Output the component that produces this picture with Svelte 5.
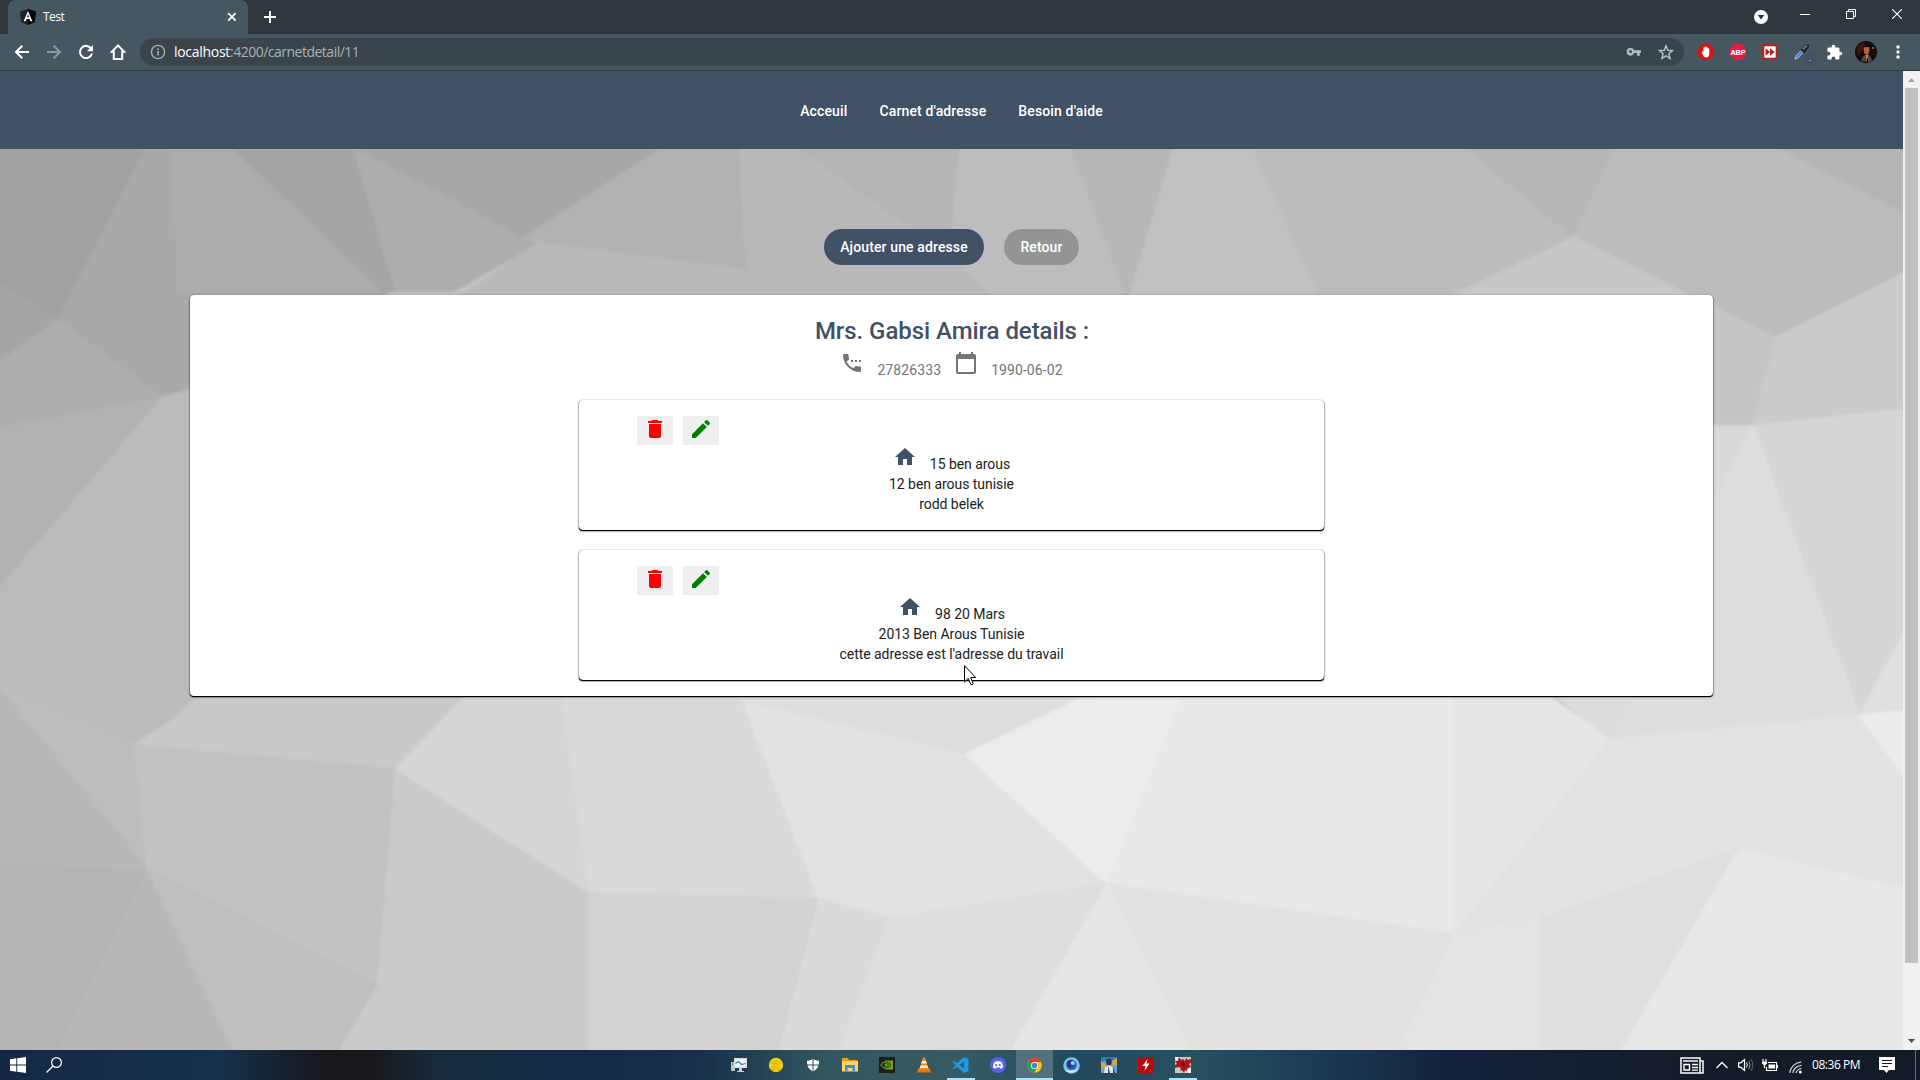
<script>
  // Facets of the low-poly page background: [fill, points]
  const facets = [
    ['#a2a2a2', '0,149 150,149 61,330 0,290'],
    ['#a5a5a5', '0,290 61,330 0,375'],
    ['#a9a9a9', '150,149 233,149 392,300 190,420 165,410 61,330'],
    ['#adadad', '61,330 165,410 0,442 0,375'],
    ['#b2b2b2', '0,442 165,410 0,611'],
    ['#acacac', '175,149 233,149 392,300 180,300'],
    ['#a5a5a5', '233,149 355,149 398,300 385,300'],
    ['#adadad', '355,149 526,244 539,250 455,300 398,300'],
    ['#a7a7a7', '355,149 667,149 526,244'],
    ['#b2b2b2', '667,149 740,149 747,278 539,250 526,244'],
    ['#b9b9b9', '539,250 747,278 860,310 455,310'],
    ['#b9b9b9', '740,149 796,149 950,262 1000,310 860,310 747,278'],
    ['#b5b5b5', '796,149 960,149 950,262'],
    ['#bdbdbd', '960,149 1070,149 1128,310 1000,310 950,262'],
    ['#b7b7b7', '1070,149 1174,149 1128,310'],
    ['#c1c1c1', '1174,149 1251,149 1321,310 1128,310'],
    ['#bcbcbc', '1251,149 1462,149 1572,244 1440,310 1321,310'],
    ['#b7b7b7', '1462,149 1615,149 1572,244'],
    ['#bcbcbc', '1615,149 1774,149 1903,220 1903,280 1774,348 1713,318 1572,244'],
    ['#b5b5b5', '1774,149 1903,149 1903,220'],
    ['#c7c7c7', '1572,244 1713,318 1713,340 1440,310'],
    ['#c5c5c5', '1700,310 1774,348 1750,440 1700,440'],
    ['#cbcbcb', '1774,348 1903,280 1903,422 1750,440'],
    ['#d9d9d9', '1750,440 1700,620 1700,440'],
    ['#d6d6d6', '1750,440 1903,422 1903,650 1857,740'],
    ['#dddddd', '1750,440 1857,740 1609,764 1690,560'],
    ['#e0e0e0', '1903,650 1903,735 1857,740'],
    ['#bbbbbb', '0,611 165,410 200,400 200,725 137,770 0,709'],
    ['#bdbdbd', '0,709 137,770 150,899'],
    ['#b8b8b8', '0,709 150,899 0,895'],
    ['#c9c9c9', '175,745 220,700 465,700 465,725 398,795 137,770'],
    ['#c2c2c2', '137,770 398,795 392,1010 380,1020 150,899'],
    ['#b5b5b5', '0,895 150,899 60,1090 0,1090'],
    ['#b8b8b8', '150,899 238,1090 60,1090'],
    ['#bfbfbf', '150,899 380,1020 340,1090 238,1090'],
    ['#cacaca', '398,795 591,923 591,1090 340,1090 380,1020'],
    ['#d6d6d6', '465,722 490,690 565,690 591,923 398,795'],
    ['#dadada', '560,690 742,700 820,930 591,923'],
    ['#e2e2e2', '742,720 966,780 1107,914 890,950 820,930'],
    ['#dddddd', '742,722 742,690 1100,690 1080,722 966,780'],
    ['#d3d3d3', '591,923 820,930 780,1090 591,1090'],
    ['#dadada', '820,930 890,950 840,1090 780,1090'],
    ['#dedede', '890,950 1107,914 1010,1090 840,1090'],
    ['#ececec', '1080,722 1190,700 1107,914 966,780'],
    ['#e9e9e9', '1190,700 1450,700 1453,966 1107,914'],
    ['#e6e6e6', '1450,700 1540,715 1609,764 1453,966'],
    ['#dcdcdc', '1530,700 1640,700 1609,764'],
    ['#e3e3e3', '1609,764 1857,740 1903,800 1903,920 1737,878 1690,925 1453,966'],
    ['#ebebeb', '1857,740 1903,735 1903,805'],
    ['#e2e2e2', '1107,914 1453,966 1395,1090 1190,1090'],
    ['#e6e6e6', '1107,914 1190,1090 1010,1090'],
    ['#e5e5e5', '1453,966 1540,950 1540,1090 1395,1090'],
    ['#dfdfdf', '1540,950 1737,878 1618,1090 1540,1090'],
    ['#e8e8e8', '1737,878 1903,920 1903,1090 1618,1090'],
  ];

  const links = ['Acceuil', "Carnet d'adresse", "Besoin d'aide"];
  const addresses = [
    { first: '15 ben arous', second: '12 ben arous tunisie', note: 'rodd belek' },
    { first: '98 20 Mars', second: '2013 Ben Arous Tunisie', note: "cette adresse est l'adresse du travail" },
  ];
</script>

<div class="screen">
  <div class="titlebar">
    <div class="tab">
      <svg class="favicon" width="16" height="16" viewBox="0 0 16 16">
        <path d="M8 0 16 2.6 14.8 13 8 16 1.2 13 0 2.6z" fill="#1b2129" /><path d="M8 0 16 2.6 14.8 13 8 16z" fill="#05070c" />
        <path d="M8 2 3.6 12.200h2l.9-2.200h3l.9 2.200h2zM8 5.200l1 3H7z" fill="#fff" fill-rule="evenodd" />
      </svg>
      <span class="tab-title">Test</span>
      <svg width="10" height="10" viewBox="0 0 10 10"><path d="M1.2 1.2l7.4 7.4M8.6 1.2 1.2 8.6" stroke="#fff" stroke-width="1.7" /></svg>
    </div>
    <svg class="plus" width="12" height="12" viewBox="0 0 12 12"><path d="M6 0v12M0 6h12" stroke="#fff" stroke-width="2" /></svg>
    <div class="window-controls">
      <svg width="14" height="14" viewBox="0 0 14 14"><circle cx="7" cy="7" r="7" fill="#fff" /><path d="M3.7 5h6.6L7 9.4z" fill="#2d373d" /></svg>
      <svg class="up" width="10" height="10" viewBox="0 0 10 10"><path d="M0 5.5h10" stroke="#fff" /></svg>
      <svg class="up" width="10" height="10" viewBox="0 0 10 10"><path d="M.5 2.5h7v7h-7zM2.5 2.5v-2h7v7h-2" fill="none" stroke="#fff" /></svg>
      <svg class="up" width="10" height="10" viewBox="0 0 10 10"><path d="M0 0l10 10M10 0 0 10" stroke="#fff" stroke-width="1.1" /></svg>
    </div>
  </div>

  <div class="toolbar">
    <div class="cell"><svg width="16" height="16" viewBox="0 0 16 16"><path d="M15 8H2.5M8.3 1.7 2 8l6.3 6.3" fill="none" stroke="#fff" stroke-width="2" /></svg></div>
    <div class="cell"><svg width="16" height="16" viewBox="0 0 16 16"><path d="M1 8h12.5M7.7 1.7 14 8l-6.3 6.3" fill="none" stroke="#8d999e" stroke-width="2" /></svg></div>
    <div class="cell"><svg width="16" height="16" viewBox="0 0 16 16"><path d="M13.2 4.6A6.1 6.1 0 1 0 14 9.6" fill="none" stroke="#fff" stroke-width="2" /><path d="M15 1v6.2H8.8z" fill="#fff" /></svg></div>
    <div class="cell"><svg width="16" height="16" viewBox="0 0 16 16"><path d="M8 1.4 1.8 7.8h2V15h8.4V7.8h2z" fill="none" stroke="#fff" stroke-width="2" /></svg></div>
    <div class="omnibox">
      <svg width="16" height="16" viewBox="0 0 16 16"><circle cx="8" cy="8" r="6.6" fill="none" stroke="#a6aeb2" stroke-width="1.4" /><path d="M8 7v4.6M8 4.2v1.7" stroke="#a6aeb2" stroke-width="1.6" /></svg>
      <div class="url"><span class="host">localhost</span><span class="path">:4200/carnetdetail/11</span></div>
      <svg class="key" width="16" height="16" viewBox="0 0 16 16"><path d="M4.6 3.8a3.9 3.9 0 1 0 3.6 5.3H11v2.6h2.8V9.1H15V6.3H8.2a3.9 3.9 0 0 0-3.6-2.5zm0 2.5a1.4 1.4 0 1 1 0 2.8 1.4 1.4 0 0 1 0-2.8z" fill="#b3babd" fill-rule="evenodd" /></svg>
      <svg width="16" height="16" viewBox="0 0 16 16"><path d="M8 1.8l1.8 4.5 4.8.3-3.7 3.1 1.2 4.7L8 11.8l-4.1 2.6 1.2-4.7-3.7-3.1 4.8-.3z" fill="none" stroke="#b9c0c3" stroke-width="1.4" /></svg>
    </div>
    <div class="extensions">
      <div class="cell"><svg width="16" height="16" viewBox="0 0 16 16"><path d="M4.7 0h6.6L16 4.7v6.6L11.3 16H4.7L0 11.3V4.7z" fill="#e01010" /><path d="M3.600 7.500c.9-.4 1.400.4 1.800 1V4c0-1 1.400-1 1.400 0V2.900c0-1 1.400-1 1.400 0v.5c.2-.8 1.500-.8 1.500.3v1c.2-.7 1.600-.7 1.600.3V10c0 2-1 3.400-3.200 3.400-2.200 0-3-1.300-4.500-5.900z" fill="#fff" /></svg></div>
      <div class="cell"><svg width="16" height="16" viewBox="0 0 16 16"><path d="M4.7 0h6.6L16 4.7v6.6L11.3 16H4.7L0 11.3V4.7z" fill="#ec1c40" /><text x="8" y="10.800" text-anchor="middle" font-size="7.800" font-weight="700" font-family="Roboto, sans-serif" fill="#fff">ABP</text></svg></div>
      <div class="cell"><svg width="16" height="16" viewBox="0 0 16 16"><rect width="16" height="16" rx="3" fill="#b3231f" /><rect x="2.3" y="2.3" width="11.4" height="11.4" rx="1.2" fill="#fff" /><path d="M3.6 4.3 8 8l-4.4 3.7zM8 4.3 12.6 8 8 11.7z" fill="#a8201c" /></svg></div>
      <div class="cell picker"><svg width="16" height="16" viewBox="0 0 16 16"><path d="M.8 15.2 2 11.8 7.500 6.200l2 2-5.300 5.700z" fill="#3f86d8" stroke="#c9d3d8" stroke-width=".8" /><path d="M6.300 5.800 12.600.6c1.8-1 3.400.6 2.500 2.500L10.300 9.500z" fill="#22272a" /><path d="M9 5.300 13 1.600" stroke="#8b959a" stroke-width="1.200" /></svg><span class="picker-badge">.</span></div>
      <div class="cell"><svg width="17" height="17" viewBox="0 0 24 24"><path d="M20.5 11H19V7c0-1.1-.9-2-2-2h-4V3.5a2.5 2.5 0 0 0-5 0V5H4c-1.1 0-2 .9-2 2v3.8h1.5a2.7 2.7 0 0 1 0 5.4H2V20c0 1.1.9 2 2 2h3.8v-1.5a2.7 2.7 0 0 1 5.4 0V22H17c1.100 0 2-.9 2-2v-4h1.500a2.500 2.500 0 0 0 0-5z" fill="#fff" /></svg></div>
      <div class="cell"><svg width="22" height="22" viewBox="0 0 22 22"><circle cx="11" cy="11" r="11" fill="#150b0a" /><path d="M2 7c2-4 5-6 8-6L8 9l-5 6z" fill="#45140e" /><path d="M8.500 7c1-3 6-3 6 .5l-.5 4.500-2.200 2.500-2.600-2.500z" fill="#b5603f" /><path d="M8 7c1-4 7-3.500 7 .5l-1.200-1.500-4 .3z" fill="#1a0c08" /><path d="M6 20l1.500-4 3-2 1.500 7zM13 14l3 2 1 4-4 1.500z" fill="#554749" /><path d="M10.500 14l1.200 6 1.800-6z" fill="#c08a54" /><circle cx="18" cy="7" r="1" fill="#8b8b5b" /></svg></div>
      <div class="cell"><svg width="4" height="14" viewBox="0 0 4 14"><g fill="#fff"><circle cx="2" cy="2" r="1.700" /><circle cx="2" cy="7" r="1.700" /><circle cx="2" cy="12" r="1.700" /></g></svg></div>
    </div>
  </div>

  <div class="viewport">
    <div class="page">
      <nav>
        {#each links as link}<a href="#top">{link}</a>{/each}
      </nav>
      <main>
        <svg class="backdrop" viewBox="0 149.4 1903 940.2" preserveAspectRatio="none">
          {#each facets as [fill, points]}<polygon {fill} stroke={fill} stroke-width="2" {points} />{/each}
        </svg>
        <div class="actions">
          <button class="pill add">Ajouter une adresse</button>
          <button class="pill back">Retour</button>
        </div>
        <section class="card">
          <h2>Mrs. Gabsi Amira details :</h2>
          <div class="contact">
            <svg width="24" height="24" viewBox="0 0 24 24"><path d="M11 9h2v2h-2zm4 0h2v2h-2zm5 6.500c-1.250 0-2.450-.2-3.570-.57-.1-.03-.21-.05-.31-.05-.26 0-.51.1-.71.29l-2.200 2.200a15.050 15.050 0 0 1-6.590-6.580l2.200-2.210c.28-.27.36-.66.25-1.010C8.700 6.450 8.500 5.250 8.500 4c0-.55-.45-1-1-1H4c-.55 0-1 .45-1 1 0 9.390 7.610 17 17 17 .55 0 1-.45 1-1v-3.500c0-.55-.45-1-1-1zM19 9h2v2h-2z" /></svg>
            <span class="phone">27826333</span>
            <svg width="24" height="24" viewBox="0 0 24 24"><path d="M20 3h-1V1h-2v2H7V1H5v2H4c-1.100 0-2 .9-2 2v16c0 1.100.9 2 2 2h16c1.100 0 2-.9 2-2V5c0-1.100-.9-2-2-2zm0 18H4V8h16v13z" /></svg>
            <span class="date">1990-06-02</span>
          </div>
          {#each addresses as address}
            <article>
              <div class="tools">
                <button aria-label="Supprimer"><svg class="delete" width="24" height="24" viewBox="0 0 24 24"><path d="M6 19c0 1.100.9 2 2 2h8c1.100 0 2-.9 2-2V7H6v12zM19 4h-3.500l-1-1h-5l-1 1H5v2h14V4z" /></svg></button>
                <button aria-label="Modifier"><svg class="edit" width="24" height="24" viewBox="0 0 24 24"><path d="M3 17.250V21h3.750L17.810 9.940l-3.750-3.750L3 17.250zM20.710 7.040a1 1 0 0 0 0-1.410l-2.340-2.340a1 1 0 0 0-1.410 0l-1.830 1.830 3.750 3.750 1.830-1.830z" /></svg></button>
              </div>
              <div class="line first">
                <svg class="home" width="24" height="24" viewBox="0 0 24 24"><path d="M10 20v-6h4v6h5v-8h3L12 3 2 12h3v8z" /></svg>
                <span>{address.first}</span>
              </div>
              <div class="line">{address.second}</div>
              <div class="line">{address.note}</div>
            </article>
          {/each}
        </section>
      </main>
    </div>
    <div class="scrollbar">
      <svg width="17" height="17" viewBox="0 0 17 17"><path d="M5 11h7L8.500 7z" fill="#a3a3a3" /></svg>
      <div class="thumb"></div>
      <svg class="down" width="17" height="17" viewBox="0 0 17 17"><path d="M5 6h7L8.500 10z" fill="#505050" /></svg>
    </div>
  </div>

  <div class="taskbar">
    <div class="start">
      <svg width="16" height="16" viewBox="0 0 16 16"><path d="M0 2.200 6.300 1.300v6.200H0zM7.200 1.200 16 0v7.500H7.200zM0 8.500h6.300v6.200L0 13.800zM7.200 8.500H16V16l-8.800-1.200z" fill="#fff" /></svg>
      <svg width="16" height="16" viewBox="0 0 16 16"><circle cx="10.500" cy="5.500" r="4.900" fill="none" stroke="#fff" stroke-width="1.200" /><path d="M7 9 .5 15.500" stroke="#fff" stroke-width="1.300" /></svg>
    </div>
    <div class="apps">
      <div class="app"><svg width="16" height="16" viewBox="0 0 16 16"><path d="M0 5h4v9H0z" fill="#b9c2c5" /><path d="M1 6h1v2H1z" fill="#39a845" /><rect x="3" y="1" width="13" height="10" fill="#d9dfe2" /><rect x="4.500" y="2.500" width="10" height="7" fill="#f3f8fb" /><path d="M4.500 6.500l3-2 3 3 4-1" fill="none" stroke="#2583bf" stroke-width="1.200" /><path d="M8 11h3v3h2v1H6v-1h2z" fill="#c5cccf" /></svg></div>
      <div class="app"><svg width="16" height="16" viewBox="0 0 16 16"><circle cx="8" cy="8" r="7.200" fill="#f1cf12" /><path d="M3.500 7l1.200-3 1.200 3M7.500 4h2v3h-2zM11 4l1.500 3M4 9.500h3v3H4zM9 9.500v3h3v-3" fill="none" stroke="#d0a80c" stroke-width=".8" /></svg></div>
      <div class="app"><svg width="16" height="16" viewBox="0 0 16 16"><path d="M8 2c2 1.200 4 1.700 6 1.800 0 5-1.500 8.500-6 10.700C3.500 12.300 2 8.800 2 3.800c2-.1 4-.6 6-1.800z" fill="#fff" /><path d="M8 2v12M2 8h12" stroke="#2c4f5a" /></svg></div>
      <div class="app"><svg width="16" height="16" viewBox="0 0 16 16"><path d="M0 1h6l1 2h8v4H0z" fill="#e8a317" /><path d="M0 4h16v10.500H0z" fill="#ffd567" /><path d="M3 8h10v6.500h-2.500V11h-5v3.500H3z" fill="#3a93dc" /></svg></div>
      <div class="app"><svg width="16" height="16" viewBox="0 0 16 16"><rect width="16" height="16" fill="#1d1d1b" /><path d="M6 3.500h8v9H6z" fill="#76a813" /><path d="M2 8c2-4 8-4 10 0-2 4-8 4-10 0zM4.500 8c1.500-2 4-2 5 0-1 2-3.500 2-5 0z" fill="none" stroke="#33500a" stroke-width="1.100" /><path d="M2 8c1-2 2.500-3 4-3M2 8c1 2 2.500 3 4 3" fill="none" stroke="#76a813" /></svg></div>
      <div class="app"><svg width="16" height="16" viewBox="0 0 16 16"><path d="M2.500 11h11l1.500 4.500H1z" fill="#e8730c" /><path d="M7 .5h2L12.500 12c-2 1.500-7 1.500-9 0z" fill="#f58a17" /><path d="M6 4h4l.8 2.500H5.200zM4.600 8.500h6.800l.8 2.500H3.800z" fill="#f1f1ee" /></svg></div>
      <div class="app open"><svg width="17" height="16" viewBox="0 0 17 16"><path d="M12 0l4.500 2v12L12 16 5 9.800 2 12 .5 11.200 3.800 8 .5 4.800 2 4 5 6.200zM12 4.500 7.500 8l4.500 3.500z" fill="#2299e0" fill-rule="evenodd" /></svg></div>
      <div class="app"><svg width="16" height="16" viewBox="0 0 16 16"><circle cx="8" cy="8" r="8" fill="#5563ea" /><path d="M4.500 5C6 4 10 4 11.500 5c1 1.700 1.600 3.700 1.500 5.500-1 .8-1.800 1-2.500 1.200l-.7-1.200H6.200l-.7 1.200C4.800 11.500 4 11.300 3 10.500 2.900 8.700 3.500 6.700 4.500 5z" fill="#fff" /><circle cx="6.200" cy="8.200" r="1.100" fill="#5563ea" /><circle cx="9.800" cy="8.200" r="1.100" fill="#5563ea" /></svg></div>
      <div class="app open active"><svg width="15" height="15" viewBox="0 0 16 16"><circle cx="8" cy="8" r="7.800" fill="#fbc116" /><path d="M8 8 1.200 4.100A7.800 7.800 0 0 1 14.900 4.300H8z" fill="#e33b2e" /><path d="M8 8 1.200 4.100A7.800 7.800 0 0 0 7.500 15.800L11 9.800z" fill="#2c9e4b" /><circle cx="8" cy="8" r="3.800" fill="#fff" /><circle cx="8" cy="8" r="3" fill="#3f82ee" /></svg></div>
      <div class="app"><svg width="17" height="17" viewBox="0 0 17 17"><circle cx="8.500" cy="8.500" r="8.300" fill="#74c8f2" /><path d="M2 13c4 4 10 3 13-1-4 2-9 2-13 1z" fill="#d2f1ff" /><circle cx="8.500" cy="7.800" r="5.300" fill="#2f5fb4" /><circle cx="7.500" cy="6.800" r="3.800" fill="#2a3580" /><circle cx="9.800" cy="6" r="2.100" fill="#8adaf7" /></svg></div>
      <div class="app"><svg width="16" height="16" viewBox="0 0 16 16"><rect width="16" height="16" fill="#59a5dc" /><path d="M0 0h16v3L9 5 0 4z" fill="#2f7cc0" /><path d="M0 5l5 2-1 4-4 1zM11 4l5-3v7l-4 1z" fill="#e0a63b" /><path d="M5 3c1-2 5-2 5.500 0v4l-2 2-3-1.500z" fill="#33363a" /><path d="M3 16l1-6 4-2 4 2 1 6z" fill="#e4e7e7" /><path d="M7 9l2 7H7zM12 9l2 7h-2z" fill="#42484b" /></svg></div>
      <div class="app"><svg width="16" height="16" viewBox="0 0 16 16"><rect width="16" height="16" fill="#b40b0b" /><path d="M9.500 2 4.500 9h3l-1 5 5-7.500h-3z" fill="#fff" /></svg></div>
      <div class="app open"><svg width="16" height="16" viewBox="0 0 16 16"><rect width="16" height="16" fill="#c9cbca" /><path d="M4 0l2 3 2-1 2 2 1-3 2 2 3-1v4l-2 1 2 3-3 1-1 3-2-1-1 3-2-3-2 1 1-3-3-1-3 1v-3l2-1-2-3h3z" fill="#ad1717" /><path d="M0 0h4L1 4zM12 12l4-1v5h-3z" fill="#f5f5f5" /><path d="M6 6l3-1 2 3-3 2z" fill="#7e0c0c" /></svg></div>
    </div>
    <div class="tray">
      <svg class="news" width="24" height="17" viewBox="0 0 24 17"><path d="M1 1h19v15H1zM20 4h3v12h-3" fill="none" stroke="#fff" stroke-width="1.500" /><path d="M3 4h15M12 7.500h6M12 10.500h6M12 13.200h6" stroke="#fff" stroke-width="1.300" /><path d="M4 7.500h5.500v5.500H4z" fill="none" stroke="#fff" stroke-width="1.400" /></svg>
      <svg class="chevron" width="12" height="8" viewBox="0 0 12 8"><path d="M.5 7 6 1.500 11.500 7" fill="none" stroke="#fff" stroke-width="1.300" /></svg>
      <svg class="sound" width="16" height="14" viewBox="0 0 16 14"><path d="M.6 4.800h2.200L6.500 1.500v11L2.800 9.200H.6z" fill="none" stroke="#fff" stroke-width="1.200" /><path d="M8.500 4.500q1.600 2.500 0 5" fill="none" stroke="#fff" /><path d="M10.800 2.800q2.700 4.200 0 8.400" fill="none" stroke="#8f969d" /><path d="M13 1.200q3.600 5.800 0 11.600" fill="none" stroke="#5e6670" /></svg>
      <svg class="battery" width="16" height="13" viewBox="0 0 16 13"><path d="M6 3.500h8.500v8h-10V8M15.500 6v3" fill="none" stroke="#fff" stroke-width="1.200" /><path d="M6.500 5.500h6.500v4H6.500z" fill="#fff" /><path d="M1 0v2.500M4 0v2.500" stroke="#fff" stroke-width="1.200" /><path d="M0 2.500h5v2L3.100 6.300V9H1.900V6.300L0 4.500z" fill="#fff" /></svg>
      <svg class="wifi" width="14" height="13" viewBox="0 0 14 13"><path d="M.7 12C1.500 6 6 1.500 12.500.8M3.800 12C4.500 8 7.500 5 12.500 4.300M7 12c.6-2.500 2.400-4 5.500-4.500" fill="none" stroke="#d4d8dc" stroke-width="1.200" /><circle cx="11.300" cy="11" r="1.500" fill="#fff" /></svg>
      <span class="clock">08:36 PM</span>
      <svg class="notice" width="16" height="16" viewBox="0 0 16 16"><path d="M0 0h16v13h-6l-2.500 3L5 13H0z" fill="#fff" /><path d="M3 3.500h10M3 6.500h10M3 9.500h6" stroke="#151c29" stroke-width="1.200" /></svg>
      <span class="peek"></span>
    </div>
  </div>

  <svg class="cursor" width="13" height="22" viewBox="0 0 13 22"><path d="M.5.7v16.200l3.700-3.600 2.600 6.100q1.300 1.300 2.400-.6L6.700 12.500h5z" fill="#fff" stroke="#000" /></svg>
</div>

<style>
  :global(body) { overflow: hidden; }
  .screen { position: relative; width: 1920px; height: 1080px; display: flex; flex-direction: column; font-family: Roboto, sans-serif; }
  svg { display: block; flex: none; }
  button { border: 0; padding: 0; font: inherit; }

  .titlebar { height: 34px; flex: none; display: flex; align-items: center; background: #2d373d; padding-left: 8px; }
  .tab { box-sizing: border-box; width: 240px; height: 34px; display: flex; align-items: center; padding: 0 11px 0 12px; background: radial-gradient(circle at 0 0, transparent 0, #455760 0); border-radius: 8px 8px 0 0; color: #fff; font: 12px/16px "Open Sans", sans-serif; }
  .tab-title { flex: 1; padding-left: 7px; letter-spacing: -0.5px; }
  .plus { margin-left: 16px; }
  .window-controls { margin-left: auto; display: flex; align-items: center; padding-right: 18px; gap: 36px; }
  .window-controls svg:first-child { margin-right: -4px; }
  .up { position: relative; top: -3px; }

  .toolbar { height: 36px; flex: none; display: flex; align-items: center; background: #455760; padding-left: 6px; border-bottom: 1px solid #303b40; }
  .cell { width: 32px; height: 32px; flex: none; display: flex; align-items: center; justify-content: center; }
  .omnibox { width: 1544px; height: 28px; box-sizing: border-box; margin-left: 6px; border-radius: 14px; background: #39454b; display: flex; align-items: center; padding: 0 10px; }
  .url { flex: 1; padding-left: 8px; font: 14px/20px "Open Sans", sans-serif; white-space: nowrap; }
  .host { color: #fff; letter-spacing: -0.3px; }
  .path { color: #a9b1b4; letter-spacing: -0.5px; }
  .key { margin-right: 16px; }
  .extensions { display: flex; margin-left: 6px; }
  .picker { position: relative; }
  .picker-badge { position: absolute; left: 18px; top: 18px; width: 12px; height: 12px; border-radius: 2px; background: #41536a; color: #fff; font-size: 9px; line-height: 9px; text-align: center; }

  .viewport { height: 979px; flex: none; display: flex; }
  .page { width: 1903px; display: flex; flex-direction: column; }
  nav { height: 78px; flex: none; background: #415166; display: flex; align-items: center; justify-content: center; gap: 32px; }
  nav a { color: #fff; text-decoration: none; font-size: 14px; font-weight: 500; line-height: 20px; padding-top: 1px; letter-spacing: 0.14px; }
  main { flex: 1; position: relative; overflow: hidden; display: flex; flex-direction: column; align-items: center; background: #c5c5c5; }
  .backdrop { position: absolute; inset: -3px; width: calc(100% + 6px); height: calc(100% + 6px); filter: blur(1.5px); }
  .actions { position: relative; display: flex; gap: 20px; margin-top: 80px; }
  .pill { height: 36px; border-radius: 18px; color: #fff; font-size: 14px; font-weight: 500; letter-spacing: 0.12px; }
  .add { width: 160px; background: #415166; }
  .back { width: 75px; background: #949494; }

  .card { position: relative; box-sizing: border-box; width: 1523px; height: 401px; margin-top: 30px; border-radius: 4px; background: #fff; box-shadow: 0 1px 0 0 #000, 0 1px 2px 0 #000, 0 0 1px 0 rgba(0, 0, 0, 0.4); display: flex; flex-direction: column; align-items: center; padding-top: 20px; }
  h2 { margin: 0; height: 32px; padding-left: 1px; font-size: 24px; line-height: 32px; font-weight: 500; letter-spacing: -0.05px; color: #415166; }
  .contact { height: 34px; margin-top: 4px; display: flex; justify-content: center; color: #757575; font-size: 14px; line-height: 20px; }
  .contact svg { fill: #757575; }
  .contact span { padding: 9px 13px 0 14px; }
  .phone { margin-left: -1px; letter-spacing: 0.1px; }
  .contact .date { padding: 9px 0 0 13px; letter-spacing: 0.08px; }
  article { box-sizing: border-box; width: 745px; height: 130px; margin: 15px 0 5px; padding-top: 16px; border-radius: 4px; box-shadow: 0 1px 0 0 #000, 0 1px 2px 0 #000, 0 0 1px 0 rgba(0, 0, 0, 0.4); color: #212121; font-size: 14px; letter-spacing: -0.04px; }
  .tools { display: flex; gap: 10px; padding-left: 58px; height: 29px; }
  .tools button { width: 36px; height: 29px; background: #efefef; display: flex; justify-content: center; padding-top: 1px; }
  .delete { fill: #f00; }
  .edit { fill: #008000; }
  .line { line-height: 20px; text-align: center; }
  .first { height: 29px; display: flex; justify-content: center; }
  .first span { padding: 9px 0 0 13px; }
  .home { fill: #415166; }

  .scrollbar { width: 17px; background: #f1f1f1; display: flex; flex-direction: column; align-items: center; }
  .thumb { width: 13px; height: 875px; background: #c1c1c1; }
  .down { margin-top: auto; }

  .taskbar { height: 30px; flex: none; display: flex; align-items: center; background: linear-gradient(90deg, #142843 0, #15304b 220px, #18181c 320px, #18181c 370px, #152b3c 440px, #142947 600px, #18304a 700px, #335760 830px, #365b63 960px, #23495c 1070px, #28505f 1190px, #1b3c54 1310px, #14213c 1450px, #141c29 1680px, #121a27 1920px); }
  .start { display: flex; width: 720px; gap: 20px; padding-left: 10px; box-sizing: border-box; }
  .apps { display: flex; height: 30px; }
  .app { width: 37px; box-sizing: border-box; display: flex; align-items: center; justify-content: center; background-repeat: no-repeat; }
  .open { background-image: linear-gradient(#aee3f9, #aee3f9); background-size: 28px 2px; background-position: center bottom; }
  .active { background-color: #52707d; background-size: 100% 2px; }
  .tray { margin-left: auto; display: flex; align-items: center; height: 30px; }
  .chevron { margin-left: 12px; }
  .sound { margin-left: 10px; }
  .battery { margin-left: 8px; }
  .wifi { margin: 4px 0 0 11px; }
  .clock { width: 49px; margin-left: 9px; color: #fff; font: 12px/16px "Open Sans", sans-serif; letter-spacing: -0.45px; white-space: nowrap; }
  .notice { margin-left: 18px; }
  .peek { width: 1px; height: 30px; margin: 0 4px 0 20px; background: #6a707a; }

  .cursor { position: absolute; left: 964px; top: 665px; }
</style>
